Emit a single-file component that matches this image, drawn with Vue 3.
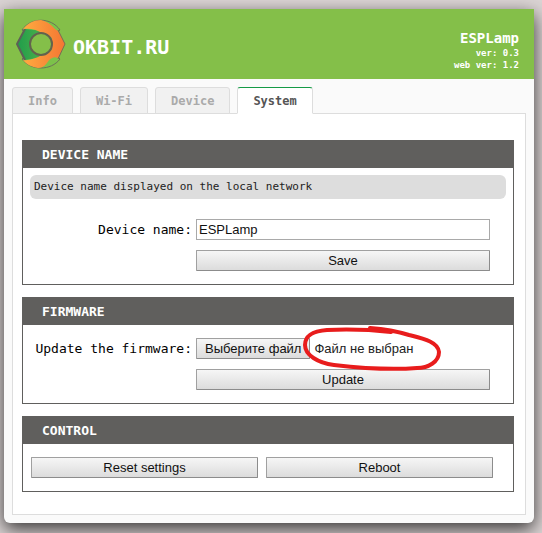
<template>
  <div class="page">
    <div class="card">
      <header class="header">
        <div class="brand">
          <svg class="logo" viewBox="0 0 50 50" aria-hidden="true">
            <defs>
              <linearGradient id="logo-green" x1="0" y1="0" x2="1" y2="0">
                <stop offset="0" stop-color="#1f9d4b" />
                <stop offset="1" stop-color="#4fb04a" />
              </linearGradient>
              <linearGradient id="logo-orange" x1="0" y1="0" x2="1" y2="0">
                <stop offset="0" stop-color="#ffab40" />
                <stop offset="1" stop-color="#f47533" />
              </linearGradient>
            </defs>
            <path d="M6 11C15-2 35-2 44 11L40 14L10 14ZM6 40C15 52 35 52 44 40L40 36L10 36Z" fill="#7cc24a" stroke="#6c7159" />
            <path d="M9 10L1 25L9 41L28 38L28 12Z" fill="url(#logo-green)" />
            <path d="M9 10L1 25L9 41" fill="none" stroke="#5d6156" stroke-width="2" />
            <path d="M7 10C12 4 18 1 25 1C30 2 35 5 39 10L42 12L49 25L42 39C38 37 34 39 31 44C28 48 25 49 22 49C16 48 11 46 7 41C14 42 20 39 26 36L36 31L36 19L26 14C20 10 14 9 7 10Z" fill="url(#logo-orange)" />
            <path d="M42 11L49 25L42 40" fill="none" stroke="#7d6a52" />
            <circle cx="25" cy="25" r="11" fill="#84bf49" stroke="#62634d" stroke-width="2" />
          </svg>
          <span class="brand-name">OKBIT.RU</span>
        </div>
        <div class="device">
          <div class="device-name">{{ deviceName }}</div>
          <div>ver: 0.3</div>
          <div>web ver: 1.2</div>
        </div>
      </header>

      <nav class="tabs">
        <button
          v-for="tab in tabs"
          :key="tab"
          type="button"
          class="tab"
          :class="{ active: tab === activeTab }"
          @click="activeTab = tab"
        >{{ tab }}</button>
      </nav>

      <main class="panel">
        <section class="section">
          <h2 class="section-title">DEVICE NAME</h2>
          <p class="note">Device name displayed on the local network</p>
          <form class="form after-note" @submit.prevent>
            <label for="device-name">Device name:</label>
            <input id="device-name" v-model="deviceName" class="text-input" type="text" />
            <button class="btn second" type="submit">Save</button>
          </form>
        </section>

        <section class="section">
          <h2 class="section-title">FIRMWARE</h2>
          <form class="form" @submit.prevent>
            <label for="firmware">Update the firmware:</label>
            <div class="file">
              <input id="firmware" class="file-input" type="file" @change="onFileChange" />
              <label for="firmware" class="btn file-btn">Выберите файл</label>
              <span class="file-name">
                {{ fileName }}
                <svg class="marker" viewBox="0 0 144 50" aria-hidden="true">
                  <path d="M69 4C82 5 95 7 108 11C124 15 137 18 138 28C138 38 127 44 116 44C91 46 59 44 33 41C17 39 4 31 4 21C4 10 14 7 26 6C48 5 72 6 90 8" />
                </svg>
              </span>
            </div>
            <button class="btn second" type="submit">Update</button>
          </form>
        </section>

        <section class="section">
          <h2 class="section-title">CONTROL</h2>
          <div class="actions">
            <button class="btn" type="button">Reset settings</button>
            <button class="btn" type="button">Reboot</button>
          </div>
        </section>
      </main>
    </div>
  </div>
</template>

<script setup>
import { ref } from 'vue'

const tabs = ['Info', 'Wi-Fi', 'Device', 'System']
const activeTab = ref('System')
const deviceName = ref('ESPLamp')
const fileName = ref('Файл не выбран')

const onFileChange = (e) => {
  const file = e.target.files[0]
  fileName.value = file ? file.name : 'Файл не выбран'
}
</script>

<style>
body {
  margin: 0;
  background: #dbd4d4;
}
</style>

<style scoped>
.page {
  box-sizing: border-box;
  min-height: 100vh;
  padding: 9px 8px 10px 4px;
  overflow: hidden;
  font-family: 'DejaVu Sans Mono', monospace;
  font-size: 13px;
  color: #000;
}

.card {
  padding-bottom: 8px;
  background: #fafafa;
  border-radius: 0 0 6px 6px;
  box-shadow: 0 6px 18px rgba(0, 0, 0, 0.75);
}

.header {
  display: flex;
  justify-content: space-between;
  align-items: center;
  box-sizing: border-box;
  height: 70px;
  padding: 0 15px 0 12px;
  background: #84bf49;
  color: #fff;
  font-weight: bold;
}

.brand {
  display: flex;
  align-items: center;
  gap: 7px;
}

.logo {
  width: 50px;
  height: 50px;
}

.brand-name {
  padding-top: 6px;
  font-size: 20px;
}

.device {
  padding-top: 12px;
  text-align: right;
  font-size: 9px;
  line-height: 12px;
}

.device-name {
  font-size: 14px;
  line-height: 18px;
}

.tabs {
  display: flex;
  gap: 7px;
  padding: 8px 8px 0;
}

.tab {
  height: 27px;
  margin-bottom: -1px;
  padding: 0 15px;
  border: 1px solid #ddd;
  border-radius: 3px 3px 0 0;
  background: #f1f1f1;
  color: #aaa;
  font: bold 12px 'DejaVu Sans Mono', monospace;
  cursor: pointer;
}

.tab.active {
  border-top-color: #159a46;
  border-bottom-color: #fff;
  background: #fff;
  color: #555;
}

.panel {
  display: flex;
  flex-direction: column;
  gap: 12px;
  margin: 0 8px;
  padding: 26px 11px 22px 9px;
  border: 1px solid #ddd;
  background: #fff;
}

.section {
  border: 1px solid #605f5d;
}

.section-title {
  margin: 0;
  padding: 0 19px;
  background: #605f5d;
  color: #fff;
  font-size: 13px;
  line-height: 27px;
}

.note {
  margin: 7px 7px 0;
  padding: 0 4px;
  border-radius: 6px;
  background: #ddd;
  color: #222;
  font-size: 11px;
  line-height: 24px;
}

.form {
  display: grid;
  grid-template-columns: 162px 1fr;
  gap: 10px 4px;
  align-items: center;
  padding: 13px 23px 13px 7px;
}

.form.after-note {
  padding-top: 20px;
}

.form > label {
  text-align: right;
  white-space: nowrap;
  justify-self: end;
}

.text-input,
.btn {
  box-sizing: border-box;
  height: 21px;
  font-family: 'Liberation Sans', Arial, sans-serif;
  font-size: 13px;
  color: #111;
}

.text-input {
  width: 100%;
  padding: 0 2px;
  border: 1px solid #a9a9a9;
  border-radius: 0;
  background: #fff;
}

.btn {
  padding: 0 8px;
  border: 1px solid #a0a0a0;
  border-right-color: #8c8c8c;
  border-bottom-color: #8c8c8c;
  border-radius: 1px;
  background: linear-gradient(#f6f6f6, #dcdcdc);
  line-height: 19px;
  text-align: center;
}

.second {
  grid-column: 2;
}

.file {
  display: flex;
  align-items: center;
  gap: 4px;
}

.file-input {
  position: absolute;
  width: 1px;
  height: 1px;
  opacity: 0;
}

.file-name {
  position: relative;
  color: #222;
  font-family: 'Liberation Sans', Arial, sans-serif;
  font-size: 13px;
  line-height: 21px;
  white-space: nowrap;
}

/* hand-drawn ring around the file status */
.marker {
  position: absolute;
  top: -14px;
  left: -13px;
  width: 144px;
  height: 50px;
  pointer-events: none;
}

.marker path {
  fill: none;
  stroke: #e81c1c;
  stroke-width: 4;
  stroke-linecap: round;
}

.actions {
  display: grid;
  grid-template-columns: 1fr 1fr;
  gap: 8px;
  padding: 13px 20px 13px 8px;
}
</style>
